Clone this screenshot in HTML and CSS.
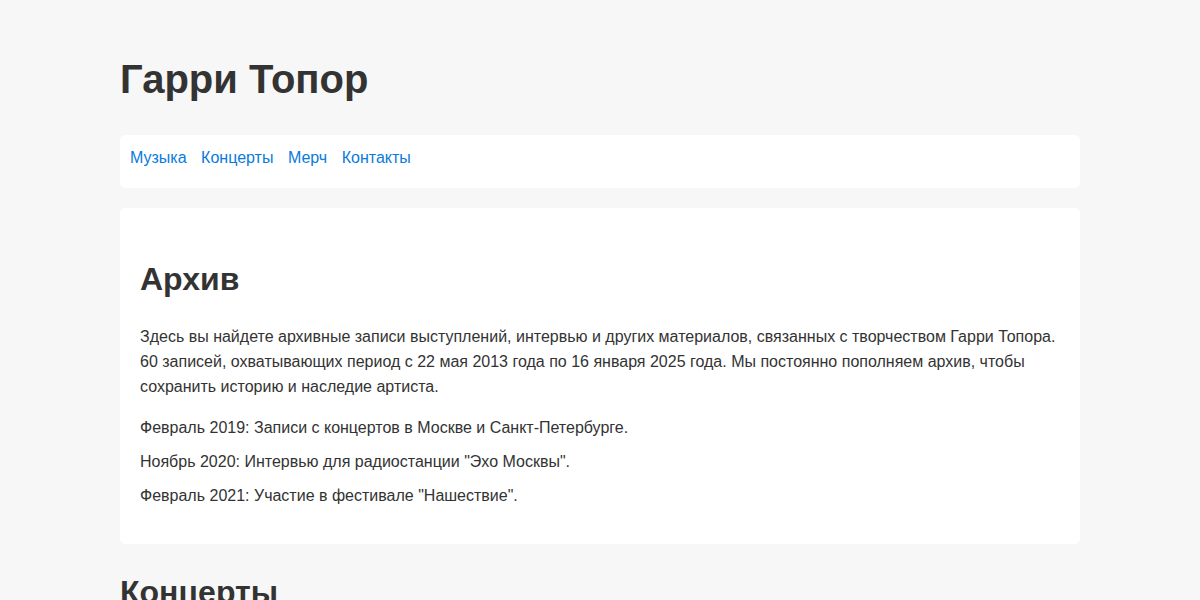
FILE: index.html
```html
<!DOCTYPE html>
<html lang="ru">
<head>
<meta charset="utf-8">
<title>Гарри Топор</title>
<link rel="stylesheet" href="styles.css">
</head>
<body>
<div class="container">
  <header class="site-header">
    <h1 class="site-title">Гарри Топор</h1>
  </header>
  <nav class="nav">
    <a href="#music">Музыка</a>
    <a href="#concerts">Концерты</a>
    <a href="#merch">Мерч</a>
    <a href="#contacts">Контакты</a>
  </nav>
  <section class="card">
    <h2 class="section-title">Архив</h2>
    <p class="text">Здесь вы найдете архивные записи выступлений, интервью и других материалов, связанных с творчеством Гарри Топора. 60 записей, охватывающих период с 22 мая 2013 года по 16 января 2025 года. Мы постоянно пополняем архив, чтобы сохранить историю и наследие артиста.</p>
    <ul class="list">
      <li>Февраль 2019: Записи с концертов в Москве и Санкт-Петербурге.</li>
      <li>Ноябрь 2020: Интервью для радиостанции "Эхо Москвы".</li>
      <li>Февраль 2021: Участие в фестивале "Нашествие".</li>
    </ul>
  </section>
  <section class="plain">
    <h2 class="section-title">Концерты</h2>
  </section>
</div>
</body>
</html>
```
FILE: styles.css
```css
html, body {
  margin: 0;
  padding: 0;
}
body {
  background: #f7f7f7;
  color: #333333;
  font-family: "Liberation Sans", Arial, sans-serif;
  font-size: 16px;
  line-height: 1.6;
}
.container {
  width: 960px;
  margin: 0 auto;
  padding-top: 55px;
}
.site-title {
  margin: 0 0 32px;
  font-size: 40px;
  line-height: 1.2;
  font-weight: bold;
}
.nav {
  background: #ffffff;
  border-radius: 5px;
  padding: 10px 10px 17px;
  display: flex;
  gap: 14.5px;
  margin-bottom: 20px;
}
.nav a {
  color: #0a7bdb;
  text-decoration: none;
}
.card {
  background: #ffffff;
  border-radius: 5px;
  padding: 20px;
  margin-bottom: 20px;
}
.section-title {
  font-size: 32px;
  line-height: 1.4;
  margin: 29px 0 23px;
  font-weight: bold;
}
.text {
  margin: 0 0 16px;
  line-height: 25px;
}
.list {
  list-style: none;
  padding: 0;
  margin: 16px 0 16px;
}
.list li {
  margin-bottom: 8px;
}
.list li:last-child {
  margin-bottom: 0;
}
.plain .section-title {
  margin-top: 26px;
}
```
